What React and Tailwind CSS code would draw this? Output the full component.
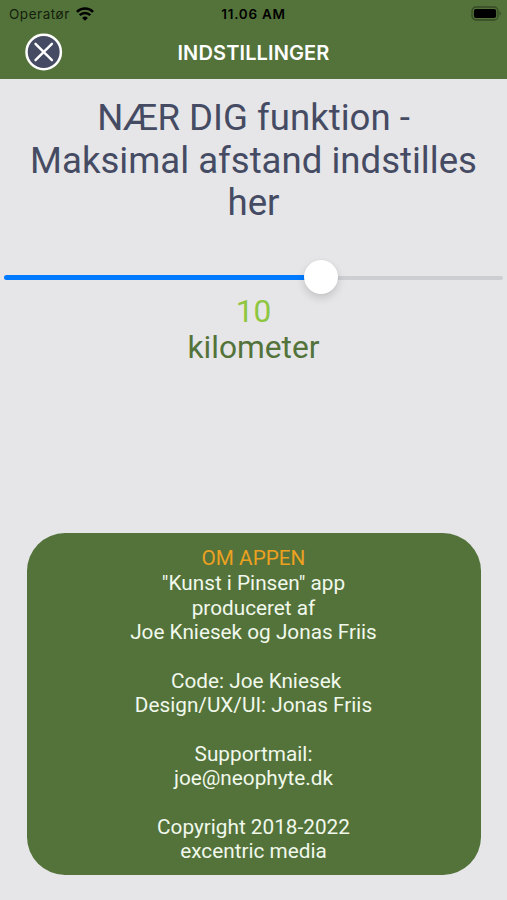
const aboutLines = [
  '"Kunst i Pinsen" app',
  "produceret af",
  "Joe Kniesek og Jonas Friis",
  "",
  "\u00a0Code: Joe Kniesek",
  "Design/UX/UI: Jonas Friis",
  "",
  "Supportmail:",
  "joe@neophyte.dk",
  "",
  "Copyright 2018-2022",
  "excentric media",
];

function WifiIcon() {
  return (
    <svg width="18" height="14" viewBox="0 0 18 14" fill="none" stroke="#000" strokeWidth="2.5">
      <path d="M0.9 4.9 A11.6 11.6 0 0 1 17.1 4.9" />
      <path d="M3.7 8.2 A7.6 7.6 0 0 1 14.3 8.2" />
      <path d="M9 13.8 L6.1 10.9 A4.1 4.1 0 0 1 11.9 10.9 Z" fill="#000" stroke="none" />
    </svg>
  );
}

function BatteryIcon() {
  return (
    <svg width="31" height="15" viewBox="0 0 31 15">
      <rect x="1" y="1" width="26" height="13" rx="4" fill="none" stroke="#000" strokeOpacity="0.35" strokeWidth="1.3" />
      <rect x="2.9" y="2.9" width="22.2" height="9.2" rx="2" fill="#000" />
      <path d="M28.6 5.3 Q31 7.5 28.6 9.7 Z" fill="#000" fillOpacity="0.4" />
    </svg>
  );
}

function CloseButton() {
  return (
    <button aria-label="Luk" className="block">
      <svg width="38" height="38" viewBox="0 0 38 38">
        <circle cx="18.7" cy="19" r="17.2" fill="#454b63" stroke="#fff" strokeWidth="2.5" />
        <path d="M10.5 10.8 L26.9 27.2 M26.9 10.8 L10.5 27.2" stroke="#fff" strokeWidth="2.4" strokeLinecap="round" />
      </svg>
    </button>
  );
}

export default function App() {
  return (
    <div className="flex h-[900px] w-[507px] flex-col overflow-hidden bg-[#e6e6e8] font-['Roboto',sans-serif]">
      <header className="h-[79px] shrink-0 bg-[#53733a] font-['Inter',sans-serif]">
        <div className="grid h-[27px] grid-cols-3 items-center text-[13.5px] text-black">
          <div className="flex items-center gap-[6px] pl-[9px]">
            <span className="pt-px tracking-[0.53px] text-[#14200c]">Operatør</span>
            <WifiIcon />
          </div>
          <span className="pt-px text-center text-[13.5px] font-semibold tracking-[0.72px]">11.06 AM</span>
          <div className="flex justify-end pr-[5px]">
            <BatteryIcon />
          </div>
        </div>
        <div className="grid h-[50px] grid-cols-[100px_1fr_100px] items-center">
          <div className="pl-[25px]">
            <CloseButton />
          </div>
          <h1 className="pt-[2px] text-center text-[20px] font-semibold tracking-[0.13px] text-white">INDSTILLINGER</h1>
        </div>
      </header>

      <main className="flex grow flex-col">
        <h2 className="mt-[17px] pt-px text-center text-[36.6px] leading-[42.5px] text-[#454b63]">
          NÆR DIG funktion -<br />
          Maksimal afstand indstilles
          <br />
          her
        </h2>

        <div className="mx-[4px] mt-[35px] flex h-[34px] items-center">
          <div className="mt-[2px] h-[5px] w-[301px] rounded-l-full bg-[#007aff]" />
          <div className="z-10 -ml-px size-[34px] shrink-0 rounded-full bg-white shadow-[0_4px_9px_rgba(0,0,0,0.15),0_0_2px_rgba(0,0,0,0.06)]" />
          <div className="-ml-px mt-[2px] h-[4px] grow rounded-r-full bg-[#cdced1]" />
        </div>

        <div className="text-center text-[31.7px] leading-[36.5px]">
          <p className="text-[#8fc641]">10</p>
          <p className="text-[#53733a]">kilometer</p>
        </div>

        <section className="mx-[26.5px] mt-auto mb-[25px] h-[342px] rounded-[38px] bg-[#53733a] pt-[13px] text-center text-[20.75px] leading-[24.35px] text-[#f1f8ec]">
          <h3 className="mb-px text-[#eca121]">OM APPEN</h3>
          {aboutLines.map((line, i) => (
            <p key={i} className="min-h-[24.35px]">
              {line}
            </p>
          ))}
        </section>
      </main>
    </div>
  );
}
